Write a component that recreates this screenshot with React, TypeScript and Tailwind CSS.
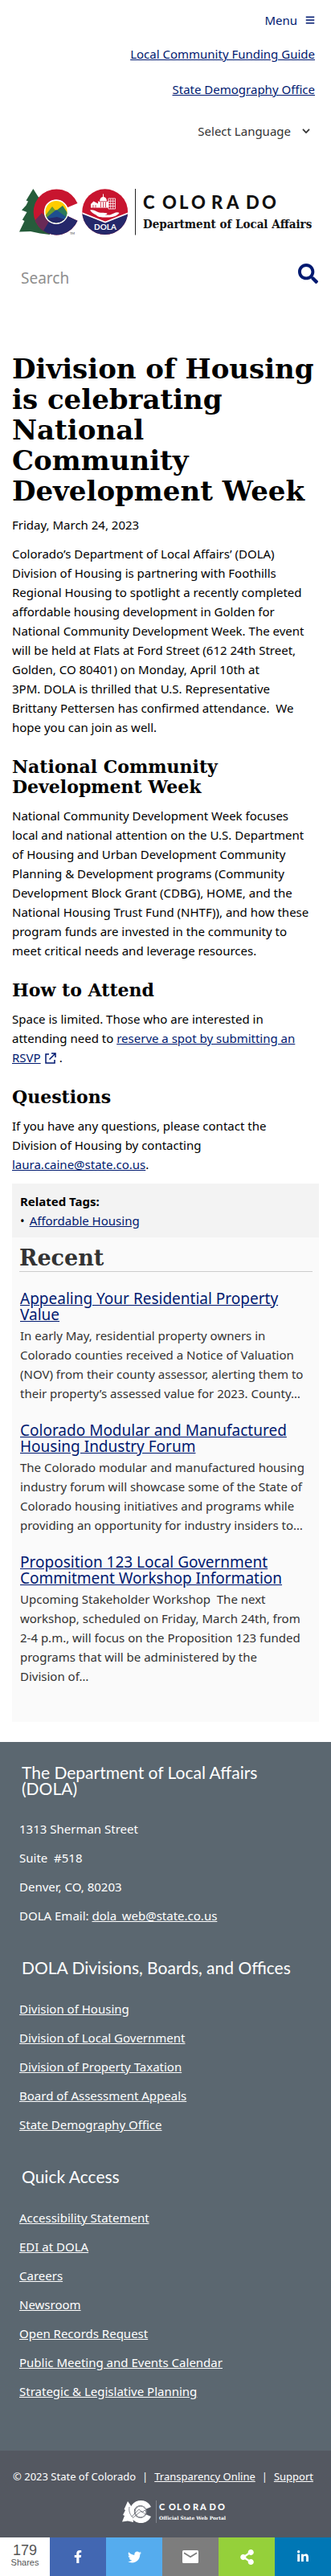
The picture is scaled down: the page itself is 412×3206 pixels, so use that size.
import type { ReactNode } from "react";
import { FaFacebookF, FaTwitter, FaLinkedinIn, FaSearch, FaShareAlt, FaBars } from "react-icons/fa";

const recent = [
  {
    title: ["Appealing Your Residential Property", "Value"],
    body: [
      "In early May, residential property owners in",
      "Colorado counties received a Notice of Valuation",
      "(NOV) from their county assessor, alerting them to",
      "their property’s assessed value for 2023. County…",
    ],
  },
  {
    title: ["Colorado Modular and Manufactured", "Housing Industry Forum"],
    body: [
      "The Colorado modular and manufactured housing",
      "industry forum will showcase some of the State of",
      "Colorado housing initiatives and programs while",
      "providing an opportunity for industry insiders to…",
    ],
  },
  {
    title: ["Proposition 123 Local Government", "Commitment Workshop Information"],
    body: [
      "Upcoming Stakeholder Workshop\u00a0 The next",
      "workshop, scheduled on Friday, March 24th, from",
      "2-4 p.m., will focus on the Proposition 123 funded",
      "programs that will be administered by the",
      "Division of…",
    ],
  },
];

const divisions = [
  "Division of Housing",
  "Division of Local Government",
  "Division of Property Taxation",
  "Board of Assessment Appeals",
  "State Demography Office",
];

const quick = [
  "Accessibility Statement",
  "EDI at DOLA",
  "Careers",
  "Newsroom",
  "Open Records Request",
  "Public Meeting and Events Calendar",
  "Strategic & Legislative Planning",
];

function Lines({ items }: { items: string[] }) {
  return (
    <>
      {items.map((t, i) => (
        <span key={i} className="block whitespace-nowrap">
          {t}
        </span>
      ))}
    </>
  );
}

function Anchor({ children }: { children: ReactNode }) {
  return (
    <a href="#" className="text-[#001970] underline">
      {children}
    </a>
  );
}

function Heading({ items }: { items: string[] }) {
  return (
    <h2 className="mb-[11px] mt-[25px] font-['DejaVu_Serif',serif] text-[22px] font-bold leading-[25px]">
      <Lines items={items} />
    </h2>
  );
}

function DolaLogo() {
  return (
    <svg viewBox="0 0 364 60" className="block w-full" role="img" aria-label="Colorado Department of Local Affairs">
      <defs>
        <clipPath id="seal">
          <circle cx="106.7" cy="29.7" r="28.4" />
        </clipPath>
        <clipPath id="sun">
          <circle cx="46" cy="29.7" r="13.6" />
        </clipPath>
        <clipPath id="cring">
          <path d="M72.5 19A28.5 28.5 0 1 0 72.5 40.8L59.8 34.8A15 15 0 1 1 59.8 24.2Z" />
        </clipPath>
      </defs>
      <path
        d="M17.3 1 23 10 28 17 38 30V58L26 56.5 14 54 0 54.4 6.5 41 3.8 39.5 9.5 30 3 27.6 8.5 21.5 11 16.5 8.5 15.5Z"
        fill="#265c3b"
      />
      <g clipPath="url(#cring)">
        <path d="M15 0H76V60H15Z" fill="#c8152f" />
        <path d="M26 50 35 37 46 30 59 33 76 36V60H26Z" fill="#25286a" />
        <path d="M18 42 28 31 38 40 29 55 20 50Z" fill="#692a56" />
      </g>
      <circle cx="46" cy="29.7" r="15.2" fill="#fff" />
      <g clipPath="url(#sun)">
        <path d="M32 15H60V45H32Z" fill="#fc0" />
        <path d="M31 36 41 23 46 29 54 23 62 36V44H31Z" fill="#6a9b2d" />
        <path d="M45 29 54 22 62 34V40H45Z" fill="#2a7a5a" />
        <path d="M31 39 46 27 61 38V46H31Z" fill="#1d4f8f" />
        <path d="M35 38 47 36 60 40V46H35Z" fill="#25286a" />
      </g>
      <text x="63" y="57.5" fontSize="4" fontFamily="Lato, sans-serif" fill="#333">
        TM
      </text>
      <g clipPath="url(#seal)">
        <path d="M78 0H136V60H78Z" fill="#c8152f" />
        <path d="M78 31.5 107 43 136 31.5V60H78Z" fill="#25286a" />
        <path d="M78 31 107 42.5 136 31" fill="none" stroke="#fff" strokeWidth="1.7" />
        <path
          d="M88 27.5C91 26.5 94 27.6 98 30 102 31.4 108 30.4 109.3 31.5 110 32.8 107 33.6 104.5 33.6L113 33.4C117 31.6 122 28.7 124.5 31 122 34.5 117 36.4 112 36.4 102 36.4 99 37 95.5 33.5 92 31.5 90 30.5 88 27.5Z"
          fill="#fff"
        />
        <path
          d="M89 24.5V20L92.5 16.5 98 19.5V16.5H100C100.2 13 102 11.3 104 11V7.5H105V11C107 11.3 109 13 109 16.5H111V24.5Z"
          fill="#fff"
        />
        <path d="M101.5 17.5V24M104.5 17.5V24M107.5 17.5V24M99 16.8H110M92 21V24.5M95 21V24.5" stroke="#c8152f" strokeWidth=".8" />
        <path d="M111 13H119.5V26H111ZM113.8 13V26M116.7 13V26M111 16.2H119.5M111 19.4H119.5M111 22.6H119.5" fill="none" stroke="#fff" strokeWidth=".8" />
        <text x="107" y="52" textAnchor="middle" fontSize="10" fontWeight="700" fontFamily="Lato, sans-serif" fill="#fff">
          DOLA
        </text>
      </g>
      <path d="M144.5 1V58.5" stroke="#222" strokeWidth="1" />
      <text x="154 178 199 214 239 258 282 302" y="25.5" fontSize="22" fontWeight="900" fontFamily="Lato, sans-serif" fill="#111">
        COLORADO
      </text>
      <text x="154" y="50" fontSize="15" fontWeight="700" fontFamily="'DejaVu Serif Condensed', 'DejaVu Serif', serif" fill="#111">
        Department of Local Affairs
      </text>
    </svg>
  );
}

function PortalLogo() {
  return (
    <svg viewBox="0 0 136 28" className="block w-[136px]" role="img" aria-label="Colorado Official State Web Portal">
      <path d="M7 1 12 8 14 27 7 25.5 0 26.5 3 19 1 18 4 12 2.5 11Z" fill="#fff" />
      <path d="M36 8A14 14 0 1 0 36 20L30 17.5A8 8 0 1 1 30 10.5Z" fill="#fff" />
      <circle cx="23" cy="14" r="7.5" fill="#fff" />
      <circle cx="23" cy="14" r="7" fill="none" stroke="#545861" strokeWidth=".8" />
      <path d="M9 8C8 14 10 18 14 22M12 20 21 11 25 15 28 12 31 15M14 21 24 13 30 18" fill="none" stroke="#545861" strokeWidth=".7" />
      <path d="M42.5 0V28" stroke="#8a8e95" strokeWidth=".8" />
      <text x="46 58 68 76 88 97 108.5 119" y="11.5" fontSize="11" fontWeight="900" fontFamily="Lato, sans-serif" fill="#fff">
        COLORADO
      </text>
      <text x="46" y="23.5" fontSize="6" fontWeight="700" fontFamily="'DejaVu Serif', serif" fill="#fff">
        Official State Web Portal
      </text>
    </svg>
  );
}

function FooterHeading({ children }: { children: ReactNode }) {
  return <h2 className="px-[3px] font-['Lato',sans-serif] text-[21px] leading-5">{children}</h2>;
}

function FooterLinks({ items }: { items: string[] }) {
  return (
    <ul className="mt-[29px] flex flex-col gap-3">
      {items.map((t) => (
        <li key={t}>
          <a href="#" className="underline">
            {t}
          </a>
        </li>
      ))}
    </ul>
  );
}

export default function App() {
  return (
    <div className="bg-white font-['Noto_Sans',sans-serif] text-[15px] leading-6 text-black">
      <header className="px-5">
        <nav className="flex flex-col items-end pt-[13px]" aria-label="Utility">
          <button type="button" className="flex items-center gap-2.5 text-[#001970]">
            Menu <FaBars className="size-3" />
          </button>
          <a href="#" className="mt-[18px] text-[#001970] underline">
            Local Community Funding Guide
          </a>
          <a href="#" className="mt-5 text-[#001970] underline">
            State Demography Office
          </a>
          <button type="button" className="mt-7 flex items-center gap-3.5 pr-1.5 text-[#333]">
            Select Language
            <svg viewBox="0 0 10 6" className="w-2.5" fill="none" stroke="#333" strokeWidth="1.8" aria-hidden="true">
              <path d="M1 .8 5 5 9 .8" />
            </svg>
          </button>
        </nav>
        <a href="#" className="mx-1 mt-[59px] block">
          <DolaLogo />
        </a>
        <form className="mt-[30px] flex h-12 justify-between" onSubmit={(e) => e.preventDefault()}>
          <input
            type="search"
            aria-label="Search"
            placeholder="Search"
            className="h-11 w-64 bg-transparent px-1.5 text-[19px] placeholder:text-[#8e8e8e] focus:outline-none"
          />
          <button type="submit" aria-label="Submit search" className="-mr-1 flex items-start pt-1">
            <FaSearch className="size-[25px] text-[#001970]" />
          </button>
        </form>
      </header>

      <main className="px-[15px] pb-[25px] pt-[68px]">
        <h1 className="font-['DejaVu_Serif',serif] text-[34px] font-bold leading-[38px]">
          <Lines items={["Division of Housing", "is celebrating", "National", "Community", "Development Week"]} />
        </h1>
        <p className="mt-[11px]">Friday, March 24, 2023</p>
        <p className="mt-3">
          <Lines
            items={[
              "Colorado’s Department of Local Affairs’ (DOLA)",
              "Division of Housing is partnering with Foothills",
              "Regional Housing to spotlight a recently completed",
              "affordable housing development in Golden for",
              "National Community Development Week. The event",
              "will be held at Flats at Ford Street (612 24th Street,",
              "Golden, CO 80401) on Monday, April 10th at",
              "3PM. DOLA is thrilled that U.S. Representative",
              "Brittany Pettersen has confirmed attendance.\u00a0 We",
              "hope you can join as well.",
            ]}
          />
        </p>

        <Heading items={["National Community", "Development Week"]} />
        <p>
          <Lines
            items={[
              "National Community Development Week focuses",
              "local and national attention on the U.S. Department",
              "of Housing and Urban Development Community",
              "Planning & Development programs (Community",
              "Development Block Grant (CDBG), HOME, and the",
              "National Housing Trust Fund (NHTF)), and how these",
              "program funds are invested in the community to",
              "meet critical needs and leverage resources.",
            ]}
          />
        </p>

        <Heading items={["How to Attend"]} />
        <p>
          <Lines items={["Space is limited. Those who are interested in"]} />
          attending need to{" "}
          <Anchor>
            reserve a spot by submitting an
            <br />
            RSVP
          </Anchor>
          <svg viewBox="0 0 14 14" className="ml-[5px] mr-1 inline size-3.5 align-[-2px]" fill="none" stroke="#001970" strokeWidth="1.5" aria-hidden="true">
            <path d="M5 2H1V13H12V9M8 1H13V6M13 1 5.5 8.5" />
          </svg>
          .
        </p>

        <Heading items={["Questions"]} />
        <p>
          <Lines items={["If you have any questions, please contact the", "Division of Housing by contacting"]} />
          <Anchor>laura.caine@state.co.us</Anchor>.
        </p>

        <section className="mt-3 bg-[#f3f3f3] px-2.5 pb-[9px] pt-2.5">
          <h2 className="font-bold">Related Tags:</h2>
          <ul>
            <li className="flex gap-1.5">
              <span>•</span>
              <Anchor>Affordable Housing</Anchor>
            </li>
          </ul>
        </section>

        <section className="bg-[#fafafa] pb-[45px] pl-2.5 pr-2 pt-3 text-[#333]">
          <h2 className="-ml-px border-b border-[#ccc] pb-0.5 font-['DejaVu_Serif',serif] text-[27px] font-bold leading-7">
            Recent
          </h2>
          <div className="mt-[23px] flex flex-col gap-6">
            {recent.map((r) => (
              <article key={r.title[0]}>
                <h3 className="text-[19px] leading-5">
                  <a href="#" className="text-[#001970] underline">
                    <Lines items={r.title} />
                  </a>
                </h3>
                <p className="mt-1">
                  <Lines items={r.body} />
                </p>
              </article>
            ))}
          </div>
        </section>
      </main>

      <footer className="text-white">
        <div className="bg-[#5b6770] px-6 pb-[62px] pt-7">
          <FooterHeading>
            <Lines items={["The Department of Local Affairs", "(DOLA)"]} />
          </FooterHeading>
          <address className="mt-7 flex flex-col gap-3 not-italic">
            <p>1313 Sherman Street</p>
            <p>Suite&nbsp; #518</p>
            <p>Denver, CO, 80203</p>
            <p>
              DOLA Email:{" "}
              <a href="#" className="underline">
                dola_web@state.co.us
              </a>
            </p>
          </address>
          <div className="mt-[43px]">
            <FooterHeading>DOLA Divisions, Boards, and Offices</FooterHeading>
            <FooterLinks items={divisions} />
          </div>
          <div className="mt-[43px]">
            <FooterHeading>Quick Access</FooterHeading>
            <FooterLinks items={quick} />
          </div>
        </div>
        <div className="bg-[#545861] px-4 pb-[18px] pt-5">
          <p className="flex justify-between whitespace-nowrap text-[13px]">
            <span>© 2023 State of Colorado</span>
            <span>|</span>
            <a href="#" className="underline">
              Transparency Online
            </a>
            <span>|</span>
            <a href="#" className="mr-1.5 underline">
              Support
            </a>
          </p>
          <div className="mt-[18px] flex justify-center pl-7">
            <PortalLogo />
          </div>
        </div>
        <div className="flex h-12 font-['Liberation_Sans',sans-serif]">
          <div className="flex w-[62px] flex-col items-center bg-white pt-[7px] text-[#555]">
            <span className="text-[18px] leading-[18px]">179</span>
            <span className="text-[11px] leading-3">Shares</span>
          </div>
          <button type="button" aria-label="Share on Facebook" className="flex flex-1 items-center justify-center bg-[#4267b2]">
            <FaFacebookF className="size-4" />
          </button>
          <button type="button" aria-label="Share on Twitter" className="flex flex-1 items-center justify-center bg-[#55acee]">
            <FaTwitter className="size-[17px]" />
          </button>
          <button type="button" aria-label="Share by email" className="flex flex-1 items-center justify-center bg-[#7d7d7d]">
            <svg viewBox="0 0 20 16" className="w-5" aria-hidden="true">
              <rect width="20" height="16" rx="1.5" fill="#fff" />
              <path d="M2 3.2 10 8.2 18 3.2" fill="none" stroke="#7d7d7d" strokeWidth="1.8" />
            </svg>
          </button>
          <button type="button" aria-label="Share" className="flex flex-1 items-center justify-center bg-[#95d03a]">
            <FaShareAlt className="size-[19px]" />
          </button>
          <button type="button" aria-label="Share on LinkedIn" className="flex flex-1 items-center justify-center bg-[#0077b5]">
            <FaLinkedinIn className="size-4" />
          </button>
        </div>
      </footer>
    </div>
  );
}
